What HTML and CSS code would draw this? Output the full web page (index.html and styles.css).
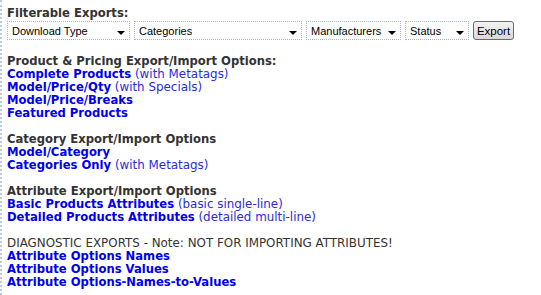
FILE: index.html
```html
<!DOCTYPE html>
<html lang="en">
<head>
  <meta charset="UTF-8">
  <title>Easy Populate Export</title>
  <link rel="stylesheet" href="styles.css">
</head>
<body>
  <div class="page">
    <form class="filters">
      <b class="title">Filterable Exports:</b>
      <div class="filter-row">
        <span class="drop sel-type"><select><option>Download Type</option></select></span>
        <span class="drop sel-cat"><select><option>Categories</option></select></span>
        <span class="drop sel-man"><select><option>Manufacturers</option></select></span>
        <span class="drop sel-status"><select><option>Status</option></select></span>
        <button type="submit" class="export-btn">Export</button>
      </div>
    </form>

    <div class="group">
      <b class="title">Product &amp; Pricing Export/Import Options:</b>
      <a href="#">Complete Products</a> <span class="note">(with Metatags)</span><br>
      <a href="#">Model/Price/Qty</a> <span class="note">(with Specials)</span><br>
      <a href="#">Model/Price/Breaks</a><br>
      <a href="#">Featured Products</a>
    </div>

    <div class="group">
      <b class="title">Category Export/Import Options</b>
      <a href="#">Model/Category</a><br>
      <a href="#">Categories Only</a> <span class="note">(with Metatags)</span>
    </div>

    <div class="group">
      <b class="title">Attribute Export/Import Options</b>
      <a href="#">Basic Products Attributes</a> <span class="note">(basic single-line)</span><br>
      <a href="#">Detailed Products Attributes</a> <span class="note">(detailed multi-line)</span>
    </div>

    <div class="group">
      <span class="title plain">DIAGNOSTIC EXPORTS - Note: NOT FOR IMPORTING ATTRIBUTES!</span>
      <a href="#">Attribute Options Names</a><br>
      <a href="#">Attribute Options Values</a><br>
      <a href="#">Attribute Options-Names-to-Values</a>
    </div>
  </div>
</body>
</html>
```

FILE: styles.css
```css
body {
  margin: 0;
  background: #fff;
  font-family: "DejaVu Sans", Verdana, sans-serif;
  font-size: 11.9px;
  line-height: 13px;
  color: #333;
}
.page {
  border-left: 2px dotted #b9c9e6;
  padding: 7px 0 0 5px;
  min-height: 288px;
}
.title {
  display: block;
  color: #333;
  font-size: 11.6px;
}
.title.plain {
  font-weight: normal;
  font-size: 11.9px;
}
.filter-row {
  display: flex;
  align-items: center;
  margin-top: 1px;
  height: 19px;
}
.drop {
  position: relative;
  display: block;
  height: 19px;
  margin-right: 4px;
}
.drop select {
  appearance: none;
  -webkit-appearance: none;
  width: 100%;
  height: 19px;
  font-family: "Liberation Sans", Arial, sans-serif;
  font-size: 11px;
  color: #000;
  padding: 0 0 0 4px;
  border: 1px dotted #aab4d0;
  border-radius: 0;
  background: #fff;
}
.drop::after {
  content: "";
  position: absolute;
  right: 5px;
  top: 10px;
  border-left: 4px solid transparent;
  border-right: 4px solid transparent;
  border-top: 4px solid #000;
  pointer-events: none;
}
.sel-type { width: 123px; }
.sel-cat { width: 168px; }
.sel-man { width: 95px; }
.sel-status { width: 64px; }
.export-btn {
  font-family: "Liberation Sans", Arial, sans-serif;
  font-size: 11.5px;
  color: #000;
  height: 19px;
  width: 41px;
  padding: 0;
  border: 1px solid #6b6b6b;
  border-radius: 3px;
  background: linear-gradient(#f4f4f4, #d8d8d8);
}
.group {
  margin-top: 15px;
}
.group + .group {
  margin-top: 13px;
}
.group a {
  color: #0000ee;
  font-weight: bold;
  font-size: 11.6px;
  text-decoration: none;
}
.note {
  color: #2b2bd9;
}
```
